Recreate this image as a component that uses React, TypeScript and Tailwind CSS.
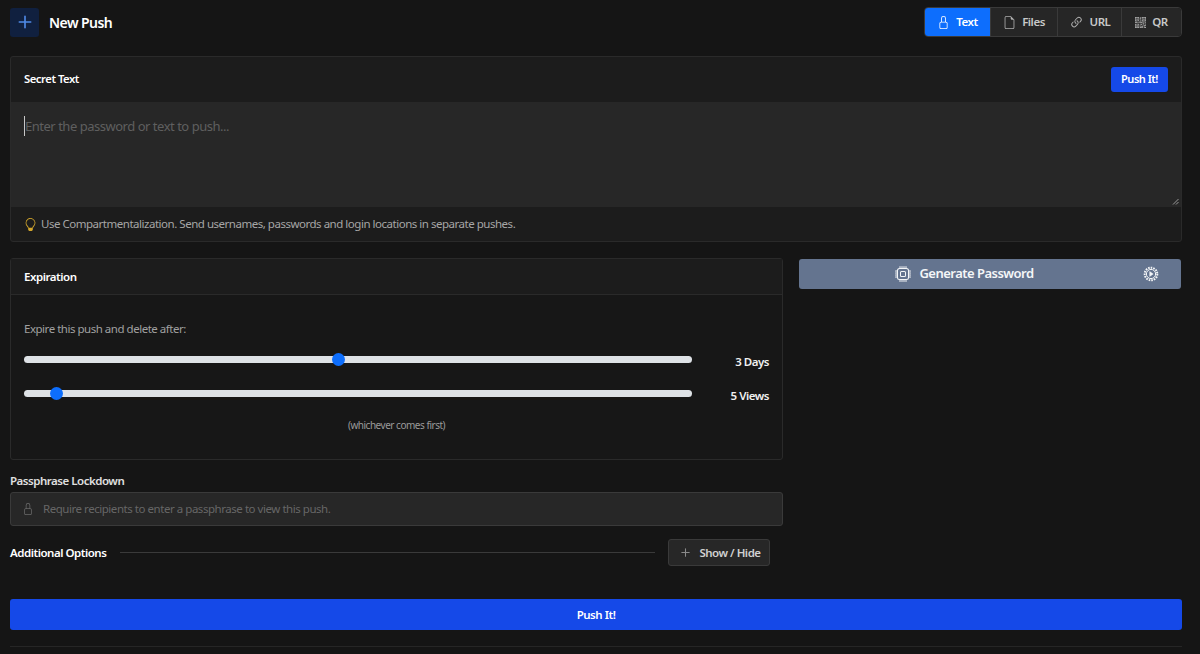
import React from 'react';
import { BsCpu, BsFileEarmark, BsLightbulb, BsLink45Deg, BsLock, BsPlus, BsQrCode } from 'react-icons/bs';

function Slider({ percent, label }: { percent: number; label: string }) {
  return (
    <div className="flex items-center h-[34px]">
      <div className="relative w-[668px] h-[7px] rounded-full bg-[#dee2e6]">
        <div
          className="absolute top-[-3px] w-[13px] h-[13px] -ml-[6.5px] rounded-full bg-[#0d6efd]"
          style={{ left: `${percent}%` }}
        />
      </div>
      <div className="ml-auto pt-[6px] text-[11.5px] font-semibold text-[#f0f0f0]">{label}</div>
    </div>
  );
}

function Tab({ icon, label, active, w }: { icon: React.ReactNode; label: string; active?: boolean; w: string }) {
  return (
    <div
      className={`${w} h-full flex items-center justify-center gap-[6px] text-[11.5px] font-semibold border-l first:border-l-0 border-[#3a3a3a] ${
        active ? 'bg-[#0d6efd] text-white' : 'bg-[#262626] text-[#c8c8c8]'
      }`}>
      {icon}
      {label}
    </div>
  );
}

export default function App() {
  return (
    <div className="w-[1200px] h-[654px] overflow-hidden bg-[#151515] pl-[10px] pr-[18px] font-['Noto_Sans',sans-serif] tracking-[-0.03em] text-[#e8e8e8]">
      {/* Title bar */}
      <div className="flex items-center h-[56px] pb-[12px]">
        <div className="w-[29px] h-[29px] rounded-[3px] bg-[#10203f] flex items-center justify-center text-[#4f8ae8]">
          <BsPlus size={26} />
        </div>
        <h1 className="ml-[10px] text-[14px] tracking-[-0.04em] font-semibold text-white">New Push</h1>
        <div className="ml-auto flex h-[30px] rounded-[4px] overflow-hidden border border-[#3a3a3a]">
          <Tab w="w-[65px]" active label="Text" icon={<BsLock size={13} />} />
          <Tab w="w-[67px]" label="Files" icon={<BsFileEarmark size={13} className="text-[#b0b0b0]" />} />
          <Tab w="w-[64px]" label="URL" icon={<BsLink45Deg size={15} className="text-[#b0b0b0]" />} />
          <Tab w="w-[60px]" label="QR" icon={<BsQrCode size={11} className="text-[#b0b0b0]" />} />
        </div>
      </div>

      {/* Secret text */}
      <div className="h-[186px] rounded-[3px] border border-[#2a2a2a] bg-[#1c1c1c] flex flex-col">
        <div className="h-[45px] shrink-0 flex items-center justify-between px-[13px]">
          <div className="text-[11.3px] font-semibold text-white">Secret Text</div>
          <button className="w-[57px] h-[25px] rounded-[3px] bg-[#1549e8] text-[11px] font-semibold text-white">Push It!</button>
        </div>
        <div className="relative h-[105px] shrink-0 bg-[#272727] px-[13px] pt-[14px]">
          <div className="text-[13px] leading-[20px] text-[#5f5f5f] border-l border-[#c8c8c8] w-fit">Enter the password or text to push...</div>
          <svg className="absolute right-[2px] bottom-[2px]" width="7" height="7" viewBox="0 0 7 7">
            <path d="M1 6.5 6.5 1M4 6.5 6.5 4" stroke="#9a9a9a" strokeWidth="1" fill="none" />
          </svg>
        </div>
        <div className="flex-1 flex items-center px-[13px] text-[11.5px] text-[#a6a6a6]">
          <BsLightbulb size={13} className="text-[#d4a72c] mr-[4px]" />
          Use Compartmentalization. Send usernames, passwords and login locations in separate pushes.
        </div>
      </div>

      {/* Expiration and generator */}
      <div className="mt-[16px] flex gap-[16px] items-start">
        <div className="w-[773px] shrink-0">
          <div className="h-[202px] rounded-[3px] border border-[#2a2a2a] bg-[#171717]">
            <div className="h-[36px] flex items-center px-[13px] border-b border-[#2a2a2a] bg-[#1c1c1c] text-[11.5px] tracking-[-0.04em] font-semibold text-white">Expiration</div>
            <div className="px-[13px] pt-[26px]">
              <div className="text-[11.5px] leading-[16px] text-[#a0a0a0] mb-[5px]">Expire this push and delete after:</div>
              <Slider percent={47.1} label="3 Days" />
              <Slider percent={4.8} label="5 Views" />
              <div className="mt-[8px] text-center text-[10px] text-[#9a9a9a]">(whichever comes first)</div>
            </div>
          </div>
          <div className="mt-[13px] text-[11.5px] leading-[16px] font-semibold text-[#e0e0e0]">Passphrase Lockdown</div>
          <div className="mt-[3px] h-[34px] flex items-center px-[11px] rounded-[3px] border border-[#3a3a3a] bg-[#272727] text-[11.5px] tracking-[-0.04em] text-[#666666]">
            <BsLock size={12} className="mr-[9px] text-[#6a6a6a]" />
            Require recipients to enter a passphrase to view this push.
          </div>
          <div className="mt-[13px] flex items-center h-[27px]">
            <div className="w-[97px] whitespace-nowrap text-[11.5px] font-semibold text-white">Additional Options</div>
            <div className="ml-[13px] w-[535px] h-px bg-[#3a3a3a]" />
            <button className="ml-[13px] w-[102px] h-[27px] flex items-center justify-center gap-[5px] rounded-[3px] border border-[#3a3a3a] bg-[#272727] text-[11.5px] font-semibold text-[#d0d0d0]">
              <BsPlus size={17} className="text-[#8a8a8a]" />
              Show / Hide
            </button>
          </div>
        </div>
        <button className="relative w-[382px] h-[30px] mt-px pr-[51px] rounded-[3px] bg-[#64748f] flex items-center justify-center gap-[8px] text-[13px] tracking-[-0.04em] font-semibold text-[#f4f6f8]">
          <BsCpu size={16} />
          Generate Password
          <svg className="absolute right-[22px] top-[7px]" width="16" height="16" viewBox="0 0 16 16" fill="none" stroke="currentColor">
            <circle cx="8" cy="8" r="6.3" strokeWidth="2" strokeDasharray="1.6 1" />
            <circle cx="8" cy="8" r="4.6" strokeWidth="1" />
            <path d="M6.7 5.6 10.2 8 6.7 10.4Z" fill="currentColor" strokeWidth="0.5" />
          </svg>
        </button>
      </div>

      {/* Footer action */}
      <button className="mt-[33px] w-full h-[31px] rounded-[3px] bg-[#1549e8] text-[11.5px] font-semibold text-white">Push It!</button>
      <div className="mt-[16px] h-px bg-[#262626]" />
    </div>
  );
}
